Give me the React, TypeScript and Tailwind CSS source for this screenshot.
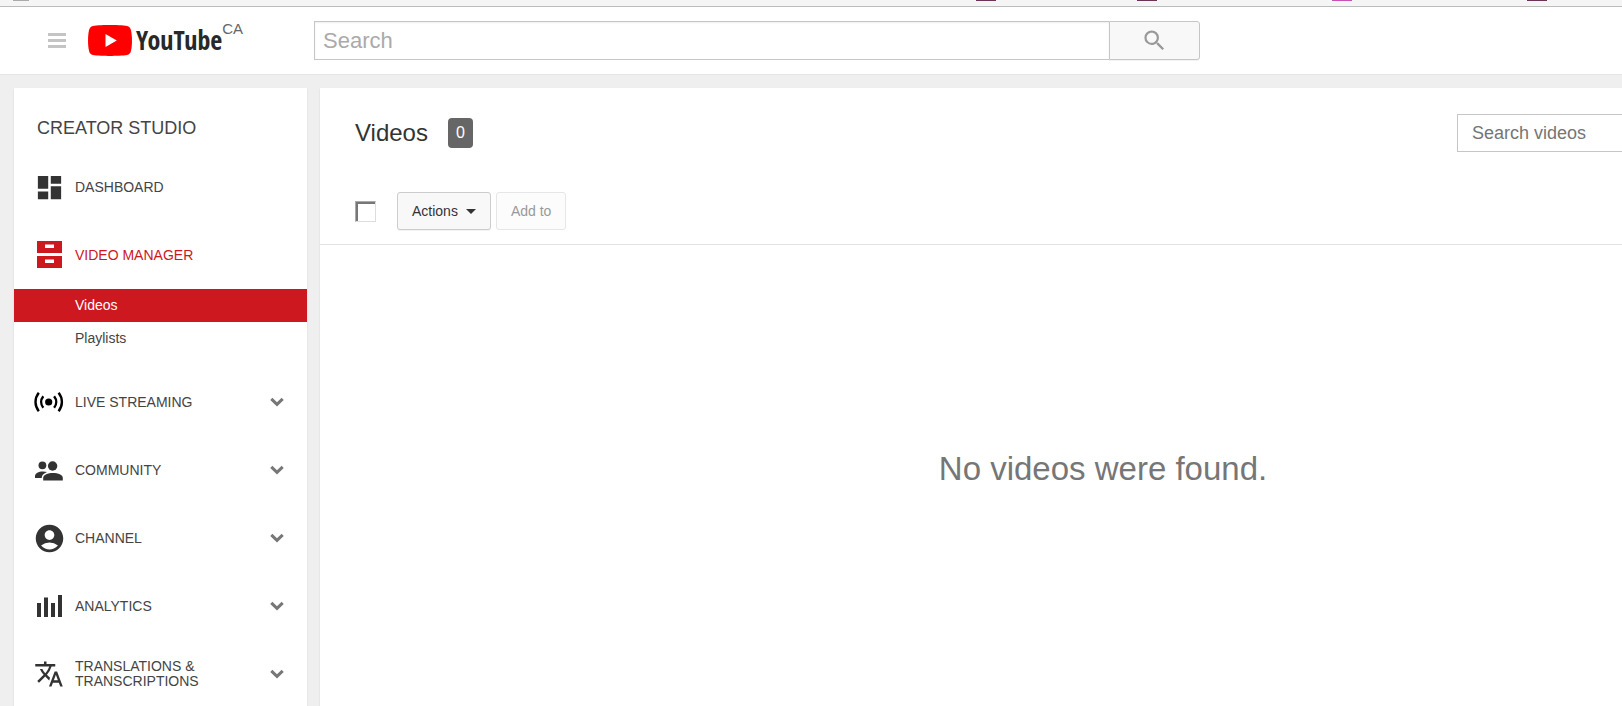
import type { ReactNode } from "react";
import { MdAccountCircle, MdDashboard, MdSearch, MdTranslate } from "react-icons/md";

const LiveIcon = () => (
  <svg viewBox="0 0 32 32" className="size-8" fill="none" stroke="#000" strokeWidth="2.4">
    <circle cx="15.7" cy="16" r="3.6" fill="#000" stroke="none" />
    <path d="M10.3 10.2c-2.8 3.5-2.8 8.1 0 11.6M21.1 10.2c2.8 3.5 2.8 8.1 0 11.6" />
    <path d="M5.8 6.8c-4.4 5.6-4.4 12.8 0 18.4M25.6 6.8c4.4 5.6 4.4 12.8 0 18.4" />
  </svg>
);

const CommunityIcon = () => (
  <svg viewBox="0 0 32 32" className="size-8" fill="#333">
    <circle cx="9.4" cy="11.3" r="3.9" />
    <circle cx="19.6" cy="12" r="4.7" />
    <path d="M10 17.4c-4.5 0-8 1.900-8 4.600v2h6.700c0-2.800 2-4.600 5.300-6-1.200-.4-2.500-.6-4-.6z" />
    <path d="M20 19c-5 0-9.800 1.700-9.800 4.800v2.700h19.600v-2.700c0-3.100-4.800-4.800-9.800-4.800z" />
  </svg>
);

const AnalyticsIcon = () => (
  <svg viewBox="0 0 32 32" className="size-8" fill="#333">
    <path d="M4 13h4v14H4zM11 7.5h4V27h-4zM18 13h4v14h-4zM25 5h4v22h-4z" />
  </svg>
);

const VideoManagerIcon = () => (
  <svg viewBox="0 0 32 32" className="size-8" fill="#cc181e" fillRule="evenodd">
    <path d="M4 2h25v12H4zM12 5.5V9h9V5.5z" />
    <path d="M4 17h25v12H4zM12 20.5V24h9v-3.5z" />
  </svg>
);

const Chevron = () => (
  <svg viewBox="0 0 14 10" className="w-[14px] h-[10px]" fill="none" stroke="#777" strokeWidth="3">
    <path d="M1.3 1.8L7 7.3l5.7-5.5" />
  </svg>
);

const YouTubeLogo = () => (
  <a href="#home" className="flex items-center gap-1" aria-label="YouTube">
    <svg viewBox="0 0 44 31" className="w-11 h-[31px]">
      <path
        fill="#f00"
        d="M22 0c5 0 13.5.2 17 .9 2.300.5 3.500 2 4 4.300 1.300 6 1.300 14.600 0 20.600-.5 2.300-1.700 3.800-4 4.300-3.500.7-12 .9-17 .9s-13.500-.2-17-.9c-2.300-.5-3.500-2-4-4.300-1.300-6-1.300-14.600 0-20.600C1.500 2.900 2.700 1.400 5 .9 8.500.2 17 0 22 0z"
      />
      <path fill="#fff" d="M17.5 9v13l11.300-6.500z" />
    </svg>
    <span className="font-['Noto_Sans_ExtraCondensed','Open_Sans_Condensed','Roboto_Condensed','Liberation_Sans',sans-serif] font-bold text-[26px] leading-[31px] text-[#282828]">
      YouTube
    </span>
  </a>
);

interface NavItemProps {
  icon: ReactNode;
  label: string;
  active?: boolean;
  expandable?: boolean;
}

const NavItem = ({ icon, label, active, expandable }: NavItemProps) => (
  <a href="#nav" className="flex h-[68px] items-center gap-[10px] pl-[19px] pr-[23px] text-[#333]">
    <span className="flex size-8 shrink-0 items-center justify-center">{icon}</span>
    <span className={`w-36 text-sm leading-[15px] ${active ? "text-[#cc181e]" : "text-[#444]"}`}>{label}</span>
    {expandable && (
      <span className="ml-auto">
        <Chevron />
      </span>
    )}
  </a>
);

const Header = () => (
  <header className="flex h-[68px] items-center border-b border-[#e5e5e5] bg-white">
    <div className="flex w-[314px] shrink-0 items-center pl-12">
      <button type="button" aria-label="Guide" className="mr-[22px] flex w-[18px] flex-col gap-[3px]">
        <span className="h-[3px] bg-[#c4c4c4]" />
        <span className="h-[3px] bg-[#c4c4c4]" />
        <span className="h-[3px] bg-[#c4c4c4]" />
      </button>
      <YouTubeLogo />
      <span className="-mt-1 self-start text-[15px] leading-4 text-[#666]">CA</span>
    </div>
    <form className="flex h-[39px] w-[886px]">
      <input
        type="text"
        aria-label="Search"
        placeholder="Search"
        className="min-w-0 flex-1 border border-r-0 border-[#c6c6c6] px-2 text-[22px] shadow-[inset_0_1px_2px_#eee] outline-none placeholder:text-[#aaa]"
      />
      <button
        type="button"
        aria-label="Submit search"
        className="flex w-[91px] items-center justify-center rounded-r-[3px] border border-[#c6c6c6] bg-[#f8f8f8] shadow-[0_1px_0_rgba(0,0,0,0.05)]"
      >
        <MdSearch size={27} color="#999" />
      </button>
    </form>
  </header>
);

const Sidebar = () => (
  <nav className="w-[293px] shrink-0 bg-white shadow-[0_1px_2px_rgba(0,0,0,0.1)]">
    <h2 className="mb-px flex h-16 items-center pl-[23px] pt-4 text-lg text-[#444]">CREATOR STUDIO</h2>
    <NavItem icon={<MdDashboard size={31} />} label="DASHBOARD" />
    <NavItem icon={<VideoManagerIcon />} label="VIDEO MANAGER" active />
    <div className="pb-[13px] text-sm leading-[33px]">
      <a href="#videos" className="block bg-[#cc181e] pl-[61px] text-white">
        Videos
      </a>
      <a href="#playlists" className="block pl-[61px] text-[#444]">
        Playlists
      </a>
    </div>
    <NavItem icon={<LiveIcon />} label="LIVE STREAMING" expandable />
    <NavItem icon={<CommunityIcon />} label="COMMUNITY" expandable />
    <NavItem icon={<MdAccountCircle size={33} className="shrink-0" />} label="CHANNEL" expandable />
    <NavItem icon={<AnalyticsIcon />} label="ANALYTICS" expandable />
    <NavItem icon={<MdTranslate size={30} />} label="TRANSLATIONS & TRANSCRIPTIONS" expandable />
  </nav>
);

const VideoManager = () => (
  <main className="flex-1 bg-white shadow-[0_1px_2px_rgba(0,0,0,0.1)]">
    <div className="flex items-center px-[35px] pt-[26px]">
      <h1 className="text-2xl leading-[30px] text-[#333]">Videos</h1>
      <span className="ml-5 rounded-[4px] bg-[#666] px-2 text-base leading-[30px] text-white">0</span>
      <input
        type="text"
        aria-label="Search videos"
        placeholder="Search videos"
        className="ml-auto h-[38px] w-[394px] border border-[#c6c6c6] px-[14px] text-lg outline-none placeholder:text-[#757575]"
      />
    </div>
    <div className="mt-10 flex items-center border-b border-[#e2e2e2] px-[35px] pb-[14px]">
      <input
        type="checkbox"
        aria-label="Select all"
        className="mr-[21px] size-[21px] appearance-none border border-[#ddd] border-l-[#aaa] border-t-[#aaa] bg-white shadow-[inset_2px_2px_0_#777]"
      />
      <button
        type="button"
        className="mr-[5px] flex h-[38px] items-center gap-2 rounded-[3px] border border-[#ccc] bg-[#f8f8f8] px-[14px] text-sm text-[#333] shadow-[0_1px_0_rgba(0,0,0,0.05)]"
      >
        Actions
        <svg viewBox="0 0 10 5" className="w-[10px] h-[5px]" fill="#333">
          <path d="M0 0h10L5 5z" />
        </svg>
      </button>
      <button
        type="button"
        disabled
        className="h-[38px] rounded-[3px] border border-[#e6e6e6] bg-[#fcfcfc] px-[14px] text-sm text-[#999]"
      >
        Add to
      </button>
    </div>
    <p className="pt-[200px] text-center text-[33px] leading-[48px] text-[#767676]">No videos were found.</p>
  </main>
);

const App = () => {
  return (
    <div className="min-h-screen overflow-x-hidden bg-[#efefef] font-['Liberation_Sans',Arial,sans-serif]">
      <div className="min-w-[1886px]">
        <div className="flex h-[7px] items-start border-b border-[#bbb] bg-[#f5f5f5]">
          <span className="ml-[13px] h-px w-4 bg-[#aaa]" />
          <span className="ml-[947px] h-px w-5 bg-[#6b3355]" />
          <span className="ml-[141px] h-px w-5 bg-[#6b3355]" />
          <span className="ml-[175px] h-px w-5 bg-[#c653b4]" />
          <span className="ml-[175px] h-px w-5 bg-[#6b3355]" />
        </div>
        <Header />
        <div className="flex gap-[13px] pl-[14px] pt-[13px]">
          <Sidebar />
          <VideoManager />
        </div>
      </div>
    </div>
  );
};

export default App;
